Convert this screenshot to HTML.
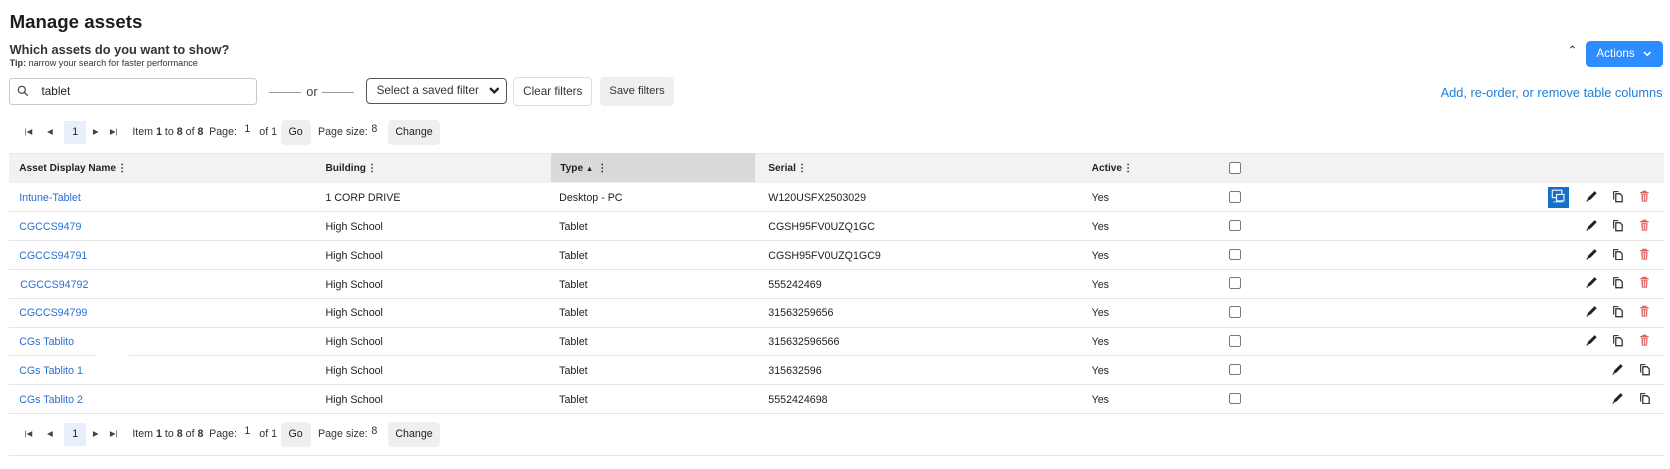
<!DOCTYPE html>
<html><head><meta charset="utf-8">
<style>
html,body{margin:0;padding:0;background:#fff;overflow:hidden}
body{width:1670px;height:469px;font-family:"Liberation Sans",Arial,sans-serif;color:#222}
#w{position:relative;width:1565px;height:440px;zoom:1.0671}
.a{position:absolute;white-space:nowrap}
.btn{position:absolute;box-sizing:border-box;border-radius:4px;font-size:11px;display:flex;align-items:center;justify-content:center}
.pg{font-size:10px;color:#333}
.row{position:absolute;left:8px;width:1551px;height:27px;border-bottom:1px solid #e6e6e6;font-size:10px;color:#222}
.row span{position:absolute;top:9px}
.cb{position:absolute;width:9px;height:9px;border:1px solid #777;border-radius:2px;background:#fff}
.nm{color:#2a6fd0}
.ic{position:absolute;top:5px}
.hd{font-size:9.5px;font-weight:bold;top:153px}
.hd b{margin-left:1px}
</style></head><body><div id="w">
<div class="a" style="left:9px;top:10px;font-size:17.5px;font-weight:bold;color:#1d1d1d">Manage assets</div>
<div class="a" style="left:9px;top:39px;font-size:12px;font-weight:bold;color:#333">Which assets do you want to show?</div>
<div class="a" style="left:9px;top:54px;font-size:8.5px;color:#333"><b>Tip:</b> narrow your search for faster performance</div>

<div class="btn" style="left:8px;top:73px;width:233px;height:25px;border:1px solid #c8c8c8;justify-content:flex-start;border-radius:3px">
<svg style="margin-left:7px" width="11" height="11" viewBox="0 0 11 11"><circle cx="4.5" cy="4.5" r="3.3" fill="none" stroke="#444" stroke-width="1.1"/><line x1="7" y1="7" x2="10" y2="10" stroke="#444" stroke-width="1.2"/></svg>
<span style="margin-left:12px;font-size:11px">tablet</span></div>
<div class="a" style="left:252px;top:86px;width:30px;border-top:1px solid #999"></div>
<div class="a" style="left:287px;top:79px;font-size:12px;color:#444">or</div>
<div class="a" style="left:302px;top:86px;width:30px;border-top:1px solid #999"></div>
<div class="btn" style="left:343px;top:73px;width:132px;height:24px;border:1px solid #555;justify-content:space-between;padding:0 6px 0 9px;color:#333">Select a saved filter<svg width="10" height="7" viewBox="0 0 10 7"><path d="M1 1l4 4 4-4" fill="none" stroke="#222" stroke-width="2.2"/></svg></div>
<div class="btn" style="left:481px;top:72px;width:74px;height:27px;border:1px solid #ddd;color:#333">Clear filters</div>
<div class="btn" style="left:562px;top:72px;width:70px;height:27px;background:#efefef;color:#333;font-size:10.5px">Save filters</div>

<div class="a" style="left:1469px;top:40px;font-size:11px;color:#333">&#8963;</div>
<div class="btn" style="left:1486px;top:38px;width:72px;height:25px;background:#2d8cff;color:#fff;font-size:11px">Actions<svg style="margin-left:8px" width="8" height="6" viewBox="0 0 8 6"><path d="M1 1l3 3 3-3" fill="none" stroke="#fff" stroke-width="1.5"/></svg></div>
<div class="a" style="right:7px;top:80px;font-size:12px;color:#1f7fd8">Add, re-order, or remove table columns</div>

<div id="p1"></div>

<div class="a" style="left:8px;top:143px;width:1551px;height:28px;background:#f2f2f2;border-top:1px solid #e8e8e8"></div>
<div class="a" style="left:516px;top:143px;width:192px;height:28px;background:#d9d9d9"></div>
<div class="a hd" style="left:18px">Asset Display Name<b>&#8942;</b></div>
<div class="a hd" style="left:305px">Building<b>&#8942;</b></div>
<div class="a hd" style="left:525px">Type <span style="font-size:7px">&#9650;</span> <b>&#8942;</b></div>
<div class="a hd" style="left:720px">Serial<b>&#8942;</b></div>
<div class="a hd" style="left:1023px">Active<b>&#8942;</b></div>
<div class="cb" style="left:1152px;top:152px"></div>

<div id="rows"></div>
<div class="a" style="left:8px;top:426px;width:1551px;border-top:1px solid #e6e6e6"></div>
</div>
<script>
function pager(y){
 var s='';
 var ic=function(x,t){return '<div class="a pg" style="left:'+x+'px;top:'+(y-5)+'px;font-size:7px;color:#444">'+t+'</div>';};
 s+=ic(23,'|&#9664;')+ic(44,'&#9664;')+ic(87,'&#9654;')+ic(103,'&#9654;|');
 s+='<div class="btn" style="left:60px;top:'+(y-11)+'px;width:21px;height:22px;background:#e6effb;border-radius:0;font-size:10px">1</div>';
 s+='<div class="a pg" style="left:124px;top:'+(y-6)+'px">Item <b>1</b> to <b>8</b> of <b>8</b></div>';
 s+='<div class="a pg" style="left:196px;top:'+(y-6)+'px">Page:</div>';
 s+='<div class="a pg" style="left:229px;top:'+(y-9)+'px">1</div>';
 s+='<div class="a pg" style="left:243px;top:'+(y-6)+'px">of 1</div>';
 s+='<div class="btn" style="left:263px;top:'+(y-12)+'px;width:28px;height:24px;background:#efefef;font-size:10px">Go</div>';
 s+='<div class="a pg" style="left:298px;top:'+(y-6)+'px">Page size:</div>';
 s+='<div class="a pg" style="left:348px;top:'+(y-9)+'px">8</div>';
 s+='<div class="btn" style="left:364px;top:'+(y-12)+'px;width:48px;height:24px;background:#efefef;font-size:10px">Change</div>';
 return s;
}
var pen='<svg width="12" height="12" viewBox="0 0 12 12"><path d="M2 10l1-3 6-6 2 2-6 6z" fill="#222"/><path d="M1.5 10.5l1.5-.5" stroke="#222"/></svg>';
var cp='<svg width="12" height="12" viewBox="0 0 12 12"><path d="M2.5 9V1.5H7" fill="none" stroke="#222" stroke-width="1"/><path d="M4.5 3.5h4l2 2v5.5h-6z" fill="none" stroke="#222" stroke-width="1.1"/></svg>';
var tr='<svg width="12" height="12" viewBox="0 0 12 12"><path d="M2 2.5h8M4.5 2.5V1.2h3v1.3" fill="none" stroke="#d9534f" stroke-width="1"/><path d="M3 3.5h6l-.5 7.5h-5z" fill="#e57373"/><path d="M5 4.5v5.5M7 4.5v5.5" stroke="#fff" stroke-width=".7"/></svg>';
var intune='<div class="ic" style="left:1443px;top:4px;width:19px;height:20px;background:#1470c8"><svg width="19" height="20" viewBox="0 0 19 20"><rect x="4" y="3" width="9" height="7" fill="none" stroke="#fff"/><rect x="8" y="7" width="7" height="6" fill="#1470c8" stroke="#fff"/><path d="M5 14h9" stroke="#cfe" stroke-width=".8"/></svg></div>';
var d=[["Intune-Tablet","1 CORP DRIVE","Desktop - PC","W120USFX2503029",1],
["CGCCS9479","High School","Tablet","CGSH95FV0UZQ1GC",0],
["CGCCS94791","High School","Tablet","CGSH95FV0UZQ1GC9",0],
[" CGCCS94792","High School","Tablet","555242469",0],
["CGCCS94799","High School","Tablet","31563259656",0],
["CGs Tablito","High School","Tablet","315632596566",0],
["CGs Tablito 1","High School","Tablet","315632596",2],
["CGs Tablito 2","High School","Tablet","5552424698",2]];
var h='';
d.forEach(function(r,i){
 var top=171+i*27;
 h+='<div class="row" style="top:'+top+'px"><span class="nm" style="left:'+(i==3?11:10)+'px">'+r[0]+'</span><span style="left:297px">'+r[1]+'</span><span style="left:516px">'+r[2]+'</span><span style="left:712px">'+r[3]+'</span><span style="left:1015px">Yes</span><div class="cb" style="left:1144px;top:8px"></div>';
 if(r[4]==1)h+=intune;
 if(r[4]==2){h+='<div class="ic" style="left:1502px;top:7px">'+pen+'</div><div class="ic" style="left:1527px;top:7px">'+cp+'</div>';}
 else{h+='<div class="ic" style="left:1477px;top:7px">'+pen+'</div><div class="ic" style="left:1502px;top:7px">'+cp+'</div><div class="ic" style="left:1527px;top:7px">'+tr+'</div>';}
 if(i==5)h+='<div style="position:absolute;left:83px;bottom:-1px;width:30px;height:2px;background:#fff"></div>';
 h+='</div>';
});
document.getElementById('rows').innerHTML=h;
document.getElementById('p1').innerHTML=pager(124)+pager(407);
</script>
</body></html>
